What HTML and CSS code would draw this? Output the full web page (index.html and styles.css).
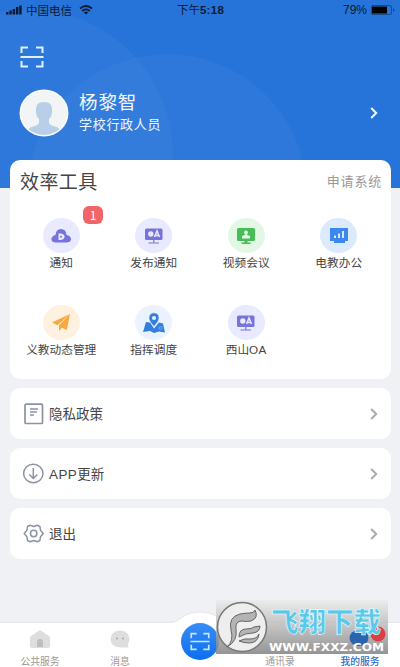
FILE: index.html
```html
<!DOCTYPE html>
<html lang="zh-CN">
<head>
<meta charset="utf-8">
<title>我的服务</title>
<link rel="stylesheet" href="styles.css">
</head>
<body>
<svg class="defs" width="0" height="0" aria-hidden="true">
  <symbol id="scan" viewBox="0 0 24 22"><path d="M1.5 7V1.5H8M16 1.5h6.500V7M1.500 15v5.500H8M16 20.500h6.500V15M.5 11h23" fill="none" stroke="currentColor" stroke-width="2"/></symbol>
  <symbol id="chevron" viewBox="0 0 8 12"><path d="M1.200 1l5 5-5 5" fill="none" stroke="currentColor" stroke-width="2"/></symbol>
  <symbol id="oa" viewBox="0 0 20 18"><rect x="1" y="1.500" width="17.500" height="11.500" rx="1.500" fill="#7674dc"/><path d="M9.800 13v3M4.500 16h10.500" stroke="#7674dc" stroke-width="1.200"/><circle cx="6.800" cy="7" r="2.700" fill="#e9e9ff"/><path d="M10.500 10l2.500-6 2.500 6M11.300 8.500h3.400" fill="none" stroke="#e9e9ff" stroke-width="1.500"/></symbol>
</svg>
<main class="screen">
  <header class="hero">
    <svg class="rings" viewBox="0 0 400 188"><circle cx="27" cy="155" r="146"/><circle cx="167" cy="194" r="140"/></svg>
    <div class="status">
      <div class="carrier">
        <svg width="16" height="10" viewBox="0 0 16 10"><path d="M0 7h2.500v2.500H0zM3.300 5.500h2.500v4H3.300zM6.600 4h2.500v5.500H6.600zM9.900 2h2.500v7.500H9.900zM13.200.5h2.500v9h-2.500z"/></svg>
        <span>中国电信</span>
        <svg class="wifi" width="14" height="10" viewBox="0 0 14 10"><path d="M1 3.500q6-5 12 0M3.200 6q3.800-3.200 7.600 0" fill="none" stroke="#0d1a33" stroke-width="1.800"/><path d="M4.800 7.300q2.200-1.500 4.400 0L7 9.600z"/></svg>
      </div>
      <span class="time">下午<b>5:18</b></span>
      <div class="power"><span class="percent">79%</span><svg width="24" height="10" viewBox="0 0 24 10"><rect x=".5" y=".5" width="20" height="9" rx="1.500" fill="none" stroke="#174b8d"/><path d="M1 1.500h15v7H1z" fill="#000"/><path d="M22 3l2 2-2 2z" fill="#174b8d"/></svg></div>
    </div>
    <svg class="scan" width="24" height="22"><use href="#scan"/></svg>
    <div class="profile">
      <svg class="avatar" width="50" height="48" viewBox="0 0 50 48"><defs><clipPath id="face"><ellipse cx="25" cy="24" rx="23" ry="22"/></clipPath></defs><ellipse cx="25" cy="24" rx="24.500" ry="23.500" fill="#fff"/><ellipse cx="25" cy="24" rx="23.200" ry="22.200" fill="#f3f4f6"/><path clip-path="url(#face)" d="M17 22q-1-9 8-9t8 9q0 6-3 8v4q2 3 8 4l4 4v6H8v-6l4-4q6-1 8-4v-4q-3-2-3-8z" fill="#b9cee9"/></svg>
      <div class="who"><h1>杨黎智</h1><p>学校行政人员</p></div>
      <svg class="go" width="8" height="12"><use href="#chevron"/></svg>
    </div>
  </header>

  <section class="tools">
    <div class="heading"><h2>效率工具</h2><span>申请系统</span></div>
    <div class="grid">
      <div class="tool"><i class="disc violet"><svg width="20" height="16" viewBox="0 0 20 16"><path d="M4 14.500Q0 14 .5 10.500 1 8 4.500 7 5 1 10 1t5.500 6q4 .5 4.500 4 0 3-4 3.500z" fill="#7674dc"/><path d="M7.500 5.500h2.500q3.500.7 3.500 3.200t-3.500 3.200H7.500z" fill="#e9e9ff"/><circle cx="10" cy="8.700" r="1" fill="#7674dc"/></svg></i><span>通知</span><b class="badge">1</b></div>
      <div class="tool"><i class="disc violet"><svg width="20" height="18"><use href="#oa"/></svg></i><span>发布通知</span></div>
      <div class="tool"><i class="disc green"><svg width="20" height="18" viewBox="0 0 20 18"><rect x="1" y="1" width="18" height="13" rx="1.500" fill="#46bd57"/><path d="M8.500 13.500h3v2h3V17h-9v-1.500h3z" fill="#46bd57"/><circle cx="10" cy="5.500" r="2" fill="#e3f7e5"/><path d="M9 6h2v2l3 1v2.500H6V9l3-1z" fill="#e3f7e5"/></svg></i><span>视频会议</span></div>
      <div class="tool"><i class="disc blue"><svg width="20" height="18" viewBox="0 0 20 18"><path d="M1 1h18v13h-3v2H5v-2H1z" fill="#3d87f0"/><path d="M6 11V8.500M10 11V6.500M14 11V4" stroke="#dceafe" stroke-width="2"/></svg></i><span>电教办公</span></div>
      <div class="tool"><i class="disc orange"><svg width="20" height="19" viewBox="0 0 20 19"><path d="M19 1L1 9.500l5.500 2.800zM19 1L8 12.500v5.500l2.800-3.300 5 2.300z" fill="#f4a944"/></svg></i><span>义教动态管理</span></div>
      <div class="tool"><i class="disc sky"><svg width="24" height="22" viewBox="0 0 24 22"><path d="M4 10l4 .5 4 6 5-6 4 1 2 9-6-1-5 1.500-4-2-7 1z" fill="#367edb"/><path d="M12 .8q5 .2 5 5.200 0 3-5 8.500Q7 9 7 6q0-5 5-5.200z" fill="#367edb" stroke="#eaf3ff" stroke-width=".5"/><circle cx="12" cy="6" r="2.100" fill="#eaf3ff"/><circle cx="18.500" cy="16" r="1.500" fill="none" stroke="#8ebaf2" stroke-width=".7"/></svg></i><span>指挥调度</span></div>
      <div class="tool"><i class="disc violet"><svg width="20" height="18"><use href="#oa"/></svg></i><span>西山<em>OA</em></span></div>
    </div>
  </section>

  <section class="row"><svg width="22" height="22" viewBox="0 0 22 22"><g fill="none" stroke="#8b93a4"><rect x="3" y="1.200" width="17.500" height="19.300" rx="1" stroke-width="1.700"/><path d="M8 6h8M8 9h7M8 12h4" stroke-width="1.300"/></g></svg><span>隐私政策</span><svg class="go" width="8" height="12"><use href="#chevron"/></svg></section>
  <section class="row"><svg width="22" height="22" viewBox="0 0 22 22"><g fill="none" stroke="#8b93a4" stroke-width="1.500"><ellipse cx="11.300" cy="10.500" rx="9.700" ry="9.200"/><path d="M11.300 5v10.500M7.300 11.500l4 4 4-4"/></g></svg><span><em>APP</em>更新</span><svg class="go" width="8" height="12"><use href="#chevron"/></svg></section>
  <section class="row"><svg width="22" height="22" viewBox="0 0 22 22"><g transform="translate(.7 -.5)" fill="none" stroke="#8b93a4" stroke-width="1.500" stroke-linejoin="round"><path d="M7.500 2.800L11 4l3.500-1.200L17.200 4l.6 3.800L20.500 11l-2.700 3.200-.6 3.800-2.700 1.200L11 18l-3.500 1.200L4.800 18l-.6-3.800L1.500 11l2.700-3.200L4.800 4z"/><circle cx="11" cy="11" r="3.200"/></g></svg><span>退出</span><svg class="go" width="8" height="12"><use href="#chevron"/></svg></section>

  <nav class="tabs">
    <div class="tab"><svg width="22" height="20" viewBox="0 0 22 20"><path d="M11 1l9 6q1 1 1 2v8q0 2-2 2H3q-2 0-2-2V9q0-1 1-2z" fill="#dedede"/><path d="M8 18v-5q0-3 3-3t3 3v5z" fill="#bebebe"/></svg><span>公共服务</span></div>
    <div class="tab"><svg width="22" height="20" viewBox="0 0 22 20"><path d="M11 1.500q9 .5 9.500 8.500 0 3-1.500 5l.5 3.500H11Q2 18 1.500 10 2 2 11 1.500z" fill="#dedede"/><circle cx="8" cy="9.500" r="1" fill="#aaa"/><circle cx="14" cy="9.500" r="1" fill="#aaa"/></svg><span>消息</span></div>
    <div class="scan-tab"><svg class="hump" width="80" height="26" viewBox="0 0 80 26"><path d="M10 12Q16 12 21 7 29 1 40 1t19 6q5 5 11 5v14H10z" fill="#fff"/><path d="M0 11.500h10Q16 11.500 21 7 29 1 40 1t19 6q5 4.500 11 4.500h10" fill="none" stroke="#e5e6e9"/></svg><i><svg width="20" height="19"><use href="#scan"/></svg></i></div>
    <div class="tab"><svg width="22" height="20"></svg><span>通讯录</span></div>
    <div class="tab active"><svg width="38" height="20" viewBox="0 0 38 20"></svg><span>我的服务</span></div>
  </nav>
  <aside class="mark">
    <svg class="spots" width="172" height="54"><ellipse cx="143" cy="38" rx="9.500" ry="8" fill="#2c63ad"/><ellipse cx="162" cy="34" rx="7.500" ry="7.500" fill="#d93f47"/></svg>
    <svg class="seal" width="52" height="52" viewBox="0 0 52 52"><circle cx="26" cy="26" r="24.500" fill="#eee" stroke="#777" stroke-width="1.500"/><path d="M11 46Q18 40 15 29q-3-13 9-16 5-1 10-1 4 0 5-3 4 8-4 11-5 1-9 0-7 0-6 8 2 12-9 18zM23 36q0-8 7-8 6 0 8-2l6-1q0 6-7 7-8 0-14 4zM23 40q6-3 11-2 7 0 9-5-1 9-10 9-5 0-10-2z" fill="#b4b4b4" stroke="#666" stroke-width="1"/></svg>
    <div class="mark-text"><strong>飞翔下载</strong><svg class="site" width="118" height="13"><text x="1" y="11" textLength="115" lengthAdjust="spacingAndGlyphs">WWW.FXXZ.COM</text></svg></div>
  </aside>
</main>
</body>
</html>
```
FILE: styles.css
```css
* { box-sizing: border-box; }
body { margin: 0; font-family: "Noto Sans CJK SC", sans-serif; color: #444; }
h1, h2, p { margin: 0; font-weight: 400; }
svg { display: block; flex: none; }
em { font-style: normal; font-family: "Liberation Sans", sans-serif; letter-spacing: .4px; }
.defs { position: absolute; }
.screen { position: relative; width: 400px; height: 667px; overflow: hidden; background: #eff1f5; display: flex; flex-direction: column; }
.hero { position: relative; height: 188px; flex: none; background: #2674d9; color: #f2f8ff; }
.rings { position: absolute; inset: 0; width: 400px; height: 188px; fill: #fff; fill-opacity: .035; }
.status { position: relative; height: 20px; display: grid; grid-template-columns: 1fr auto 1fr; align-items: center; padding: 0 5px 0 6px; font-size: 11.500px; line-height: 19px; color: #0d1a33; font-weight: 400; }
.status svg { fill: #0d1a33; }
.carrier, .power { display: flex; align-items: center; gap: 4px; }
.carrier .wifi { margin-left: 3px; }
.time b, .percent { font-family: "Liberation Sans", sans-serif; }
.time b { letter-spacing: .3px; }
.percent { font-size: 12px; }
.power { justify-content: flex-end; }
.scan { position: relative; margin: 26px 0 0 20px; color: #e0f2ff; }
.profile { position: relative; display: flex; align-items: center; margin-top: 21px; padding: 0 22px 0 19px; }
.who { flex: 1; margin: -3px 0 0 10px; }
.who h1 { font-size: 18.500px; line-height: 24px; letter-spacing: .9px; }
.who p { font-size: 13px; line-height: 21px; letter-spacing: .7px; }
.tools { position: relative; flex: none; width: 381px; height: 219px; margin: -28px 0 0 10px; background: #fff; border-radius: 10px; }
.heading { height: 41px; display: flex; justify-content: space-between; align-items: center; padding: 0 9px 0 10px; }
.heading h2 { font-size: 19px; letter-spacing: .4px; }
.heading span { font-size: 13px; letter-spacing: .8px; color: #999; }
.grid { display: grid; grid-template-columns: repeat(4, 92.500px); grid-auto-rows: 87px; padding: 17px 0 0 5px; }
.tool { position: relative; display: flex; flex-direction: column; align-items: center; white-space: nowrap; font-size: 11.700px; line-height: 17px; }
.disc { width: 37px; height: 35px; border-radius: 50%; display: flex; align-items: center; justify-content: center; }
.violet { background: #e9e9ff; }
.green { background: #e3f7e5; }
.blue { background: #dceafe; }
.orange { background: #fff1df; }
.sky { background: #eaf3ff; }
.badge { position: absolute; left: 68px; top: -12px; width: 20px; height: 18px; border-radius: 6px; background: #f16569; color: #fff; font-size: 12px; font-weight: 400; line-height: 18px; text-align: center; }
.row { flex: none; width: 381px; height: 51px; margin: 9px 0 0 10px; border-radius: 10px; background: #fff; display: flex; align-items: center; padding: 0 13px 0 12px; font-size: 13.500px; }
.row span { flex: 1; margin: -2px 0 0 5px; }
.row .go { color: #aaa; }
.tabs { position: absolute; left: 0; top: 622px; width: 400px; height: 45px; background: #fff; border-top: 1px solid #e4e5e8; display: grid; grid-template-columns: repeat(5, 80px); }
.tab { display: flex; flex-direction: column; align-items: center; padding-top: 6px; font-size: 9.800px; line-height: 16px; color: #999; }
.tab span { margin-top: 4px; }
.active { color: #286fc9; font-weight: 500; }
.scan-tab { position: relative; display: flex; justify-content: center; }
.hump { position: absolute; left: 0; top: -12px; }
.scan-tab i { position: relative; width: 38px; height: 37px; border-radius: 50%; background: linear-gradient(#398cf5, #0a70f0); color: #c7e5ff; display: flex; align-items: center; justify-content: center; }
.mark { position: absolute; left: 216px; top: 600px; width: 172px; height: 54px; display: flex; align-items: center; background: linear-gradient(rgba(235,235,235,.8), rgba(125,125,125,.82)); }
.spots { position: absolute; left: 0; top: 0; }
.seal, .mark-text { position: relative; }
.mark-text { width: 119px; padding-top: 3px; }
.mark-text strong { display: block; height: 35px; margin-left: 3px; font-size: 27.500px; line-height: 31px; font-weight: 900; color: #5cc8e9; white-space: nowrap; -webkit-text-stroke: .6px #effcff; }
.site { font-family: "DejaVu Sans", sans-serif; font-size: 11px; font-weight: 700; fill: #fff; }
```
